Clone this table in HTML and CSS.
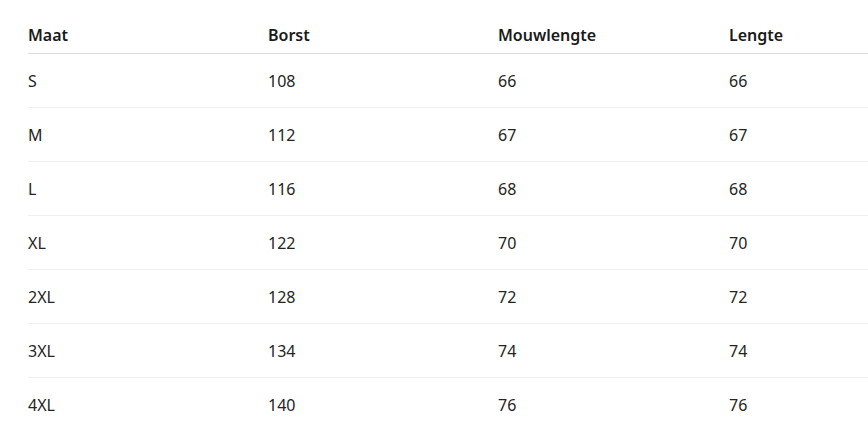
FILE: index.html
```html
<!DOCTYPE html>
<html lang="nl">
<head>
<meta charset="utf-8">
<title>Maattabel</title>
<link rel="stylesheet" href="styles.css">
</head>
<body>
<div class="wrap">
<table class="sizes">
<colgroup><col class="c1"><col class="c2"><col class="c3"><col class="c4"></colgroup>
<thead>
<tr><th>Maat</th><th>Borst</th><th>Mouwlengte</th><th>Lengte</th></tr>
</thead>
<tbody>
<tr><td>S</td><td>108</td><td>66</td><td>66</td></tr>
<tr><td>M</td><td>112</td><td>67</td><td>67</td></tr>
<tr><td>L</td><td>116</td><td>68</td><td>68</td></tr>
<tr><td>XL</td><td>122</td><td>70</td><td>70</td></tr>
<tr><td>2XL</td><td>128</td><td>72</td><td>72</td></tr>
<tr><td>3XL</td><td>134</td><td>74</td><td>74</td></tr>
<tr><td>4XL</td><td>140</td><td>76</td><td>76</td></tr>
</tbody>
</table>
</div>
</body>
</html>
```
FILE: styles.css
```css
html, body {
  margin: 0;
  padding: 0;
  background: #ffffff;
}
body {
  font-family: "Noto Sans", "Open Sans", sans-serif;
  font-size: 16px;
  color: #242424;
}
.wrap {
  padding: 16px 0 0 28px;
}
.sizes {
  width: 100%;
  border-collapse: collapse;
  table-layout: fixed;
}
.c1 { width: 240px; }
.c2 { width: 230px; }
.c3 { width: 231px; }
.sizes th {
  text-align: left;
  font-weight: 600;
  color: #1a1a1a;
  line-height: 21px;
  padding: 9px 0 7px;
  border-bottom: 1px solid #dcdcdc;
}
.sizes td {
  line-height: 21px;
  padding: 17px 0 15px;
  border-bottom: 1px solid #f0f0f0;
}
.sizes tbody tr:last-child td {
  border-bottom: none;
}
```
